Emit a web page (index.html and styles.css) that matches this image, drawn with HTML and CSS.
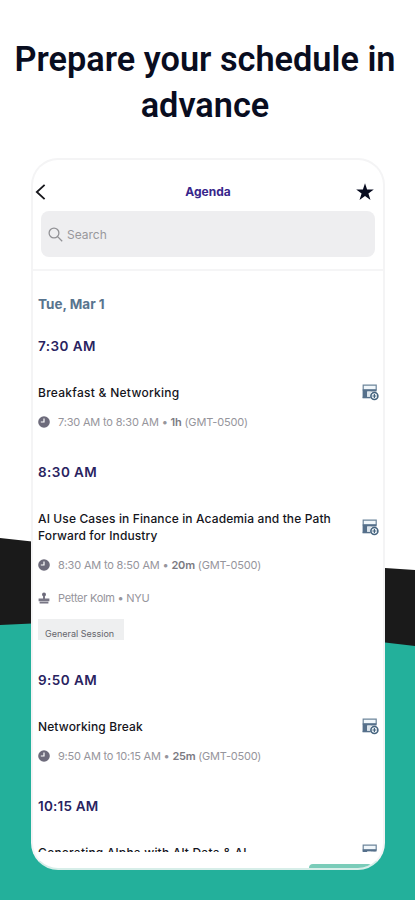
FILE: index.html
```html
<!DOCTYPE html>
<html lang="en">
<head>
<meta charset="utf-8">
<title>Agenda</title>
<link rel="stylesheet" href="styles.css">
</head>
<body>
<svg class="symbols" width="0" height="0">
  <symbol id="add" viewBox="0 0 17 17">
    <path d="M1.2 1.2h13v4.6h-13z" fill="#f1f7fb" stroke="#6d859b" stroke-width="1.2"/>
    <path d="M.6 5.6h13.9v2H5.2v6.2H.6z" fill="#56708b"/>
    <path d="M5.2 7.6h3.6v5.2H5.2z" fill="#dce5ec"/>
    <path d="M.6 13.6h8" stroke="#56708b" stroke-width="1.4"/>
    <circle cx="12.4" cy="12" r="3.5" fill="#f4f9fc" stroke="#46647f" stroke-width="1.6"/>
    <path d="M12.4 10v4M10.4 12h4" stroke="#46647f" stroke-width="1.2"/>
  </symbol>
  <symbol id="clock" viewBox="0 0 12 12">
    <circle cx="6" cy="6" r="5.8" fill="#6d6b7b"/>
    <path d="M6 2.5V6H2.8" fill="none" stroke="#fff" stroke-width="1.2"/>
  </symbol>
  <symbol id="speaker" viewBox="0 0 12 12">
    <circle cx="6" cy="2.4" r="2" fill="#6d6b7b"/>
    <path d="M5 4h2v2.4h4.4v2.8H.6V6.4H5zM1.6 9.8h8.8v1.6H1.6z" fill="#777584"/>
  </symbol>
</svg>
<div class="page">
  <svg class="backdrop" viewBox="0 0 415 900">
    <path d="M0 538L32 541.5 385 568 415 570V900H0z" fill="#1a1a1a"/>
    <path d="M0 625L32 623.5C150 620 290 630 385 642.5L415 646V900H0z" fill="#23b09b"/>
  </svg>
  <h1 class="headline">Prepare your schedule in<br>advance</h1>
  <main class="phone">
    <header class="topbar">
      <svg class="back" viewBox="0 0 12 18"><path d="M10.5 1.2L2 9l8.5 7.8" fill="none" stroke="#17171c" stroke-width="2"/></svg>
      <span class="title">Agenda</span>
      <svg class="star" viewBox="0 0 18 18"><path d="M9 .2l2.1 6.3h6.7l-5.4 4 2.1 6.6L9 13.1l-5.5 4 2.1-6.6-5.4-4h6.7z" fill="#080c20"/></svg>
    </header>
    <div class="search">
      <svg class="lens" viewBox="0 0 15 15"><circle cx="6" cy="6" r="4.9"/><path d="M9.6 9.6l4.6 4.6"/></svg>
      <span>Search</span>
    </div>
    <div class="rule"></div>
    <section class="agenda">
      <h2 class="date">Tue, Mar 1</h2>
      <h3 class="time first">7:30 AM</h3>
      <article class="session">
        <div class="heading"><h4 class="t1">Breakfast &amp; Networking</h4><svg class="add"><use href="#add"/></svg></div>
        <p class="meta"><svg class="glyph"><use href="#clock"/></svg><span>7:30 AM to 8:30 AM • <b>1h</b> (GMT-0500)</span></p>
      </article>
      <h3 class="time second">8:30 AM</h3>
      <article class="session">
        <div class="heading"><h4>AI Use Cases in Finance in Academia and the Path<br>Forward for Industry</h4><svg class="add"><use href="#add"/></svg></div>
        <p class="meta"><svg class="glyph"><use href="#clock"/></svg><span>8:30 AM to 8:50 AM • <b>20m</b> (GMT-0500)</span></p>
        <p class="meta speaker"><svg class="glyph"><use href="#speaker"/></svg><span class="person">Petter Kolm • NYU</span></p>
        <span class="tag">General Session</span>
      </article>
      <h3 class="time third">9:50 AM</h3>
      <article class="session">
        <div class="heading"><h4>Networking Break</h4><svg class="add"><use href="#add"/></svg></div>
        <p class="meta"><svg class="glyph"><use href="#clock"/></svg><span class="m4">9:50 AM to 10:15 AM • <b>25m</b> (GMT-0500)</span></p>
      </article>
      <h3 class="time fourth">10:15 AM</h3>
      <article class="session">
        <div class="heading"><h4 class="t4">Generating Alpha with Alt Data &amp; AI</h4><svg class="add"><use href="#add"/></svg></div>
      </article>
    </section>
    <footer class="bottom"><div class="tab"></div></footer>
  </main>
</div>
</body>
</html>
```
FILE: styles.css
```css
* { box-sizing: border-box; }
body { margin: 0; background: #fff; font-family: Inter, "Liberation Sans", sans-serif; }
h1, h2, h3, h4, p { margin: 0; }
svg { display: block; flex: none; }
.symbols, .backdrop { position: absolute; }
.backdrop { inset: 0; width: 415px; height: 900px; }
.page { position: relative; width: 415px; height: 900px; overflow: hidden; padding-top: 36px; }
.headline { position: relative; height: 122px; padding-right: 5px; text-align: center; font: 600 34.3px/46px Roboto, sans-serif; color: #090d1f; white-space: nowrap; }
.phone { position: relative; display: flex; flex-direction: column; width: 354px; height: 712px; margin-left: 31px; background: #fff; border: 2px solid #f4f4f5; border-bottom-color: #d7eee9; border-radius: 27px; overflow: hidden; }
.topbar { flex: none; display: flex; align-items: center; justify-content: space-between; height: 51px; padding: 12px 9px 0 2px; }
.back { width: 11px; height: 18px; }
.title { font-size: 12px; font-weight: 700; color: #38268b; margin-left: 14px; }
.star { width: 18px; height: 18px; }
.search { flex: none; display: flex; align-items: center; gap: 4px; height: 46px; margin: 0 8px; padding: 1px 0 0 7px; border-radius: 8px; background: #eeeef0; color: #98989c; font-size: 12px; }
.lens { width: 15px; height: 15px; fill: none; stroke: #929296; stroke-width: 1.3; }
.rule { flex: none; height: 2px; margin-top: 12px; background: #f5f5f6; }
.agenda { height: 581px; flex: none; padding: 22px 5px 0 5px; overflow: hidden; }
.date { height: 22px; font-size: 13.5px; line-height: 22px; font-weight: 700; color: #58748e; }
.time { height: 22px; font-size: 13.5px; line-height: 22px; font-weight: 600; letter-spacing: .45px; color: #29235f; white-space: nowrap; }
.first { margin: 20px 0 27px; }
.second { margin: 31px 0 27px; }
.third { margin: 29px 0 27px; }
.fourth { margin: 31px 0 27px; letter-spacing: .2px; }
.heading { display: flex; justify-content: space-between; align-items: center; min-height: 17px; }
.heading h4 { font-size: 12px; line-height: 17px; font-weight: 500; letter-spacing: .12px; color: #15151c; white-space: nowrap; }
.heading .t1 { letter-spacing: .27px; }
.heading .t4 { letter-spacing: .2px; }
.add { width: 17px; height: 17px; margin-right: -1px; }
.meta { display: flex; align-items: center; gap: 8px; height: 16px; margin-top: 13px; font-size: 11px; font-weight: 400; letter-spacing: -.18px; color: #96959c; white-space: nowrap; }
.meta b { font-weight: 600; color: #7b7a82; }
.meta .m4 { letter-spacing: -.22px; }
.meta .person { letter-spacing: -.27px; }
.glyph { width: 12px; height: 12px; }
.speaker { margin-top: 17px; }
.tag { display: block; width: 86px; height: 21px; margin-top: 13px; padding: 6px 0 0 7px; background: #eeeff0; color: #64646b; font-size: 9px; line-height: 18px; white-space: nowrap; overflow: hidden; }
.bottom { display: flex; justify-content: flex-end; align-items: flex-end; flex: 1; padding-right: 12px; }
.tab { width: 62px; height: 4px; border-radius: 12px 8px 0 0; background: #7accb9; }
```
